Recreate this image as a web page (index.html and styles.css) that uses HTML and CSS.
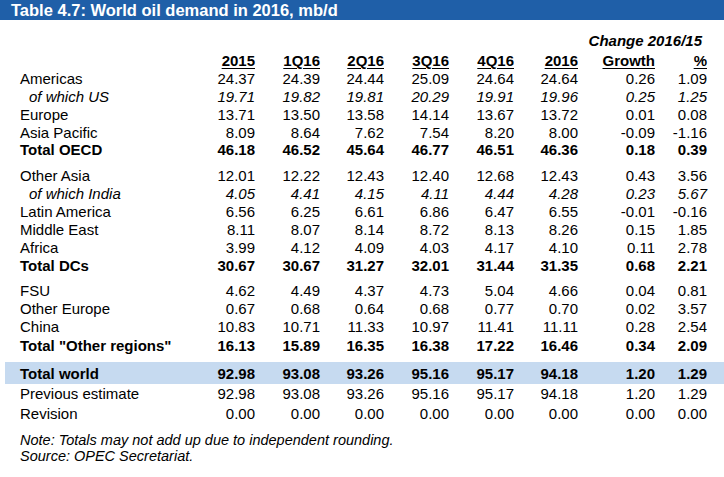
FILE: index.html
```html
<!DOCTYPE html>
<html>
<head>
<meta charset="utf-8">
<link rel="stylesheet" href="styles.css">
</head>
<body>
<div class="title">Table 4.7: World oil demand in 2016, mb/d</div>
<div class="tbl">
  <div class="change">Change 2016/15</div>
  <div class="row head">
    <span></span><span><u>2015</u></span><span><u>1Q16</u></span><span><u>2Q16</u></span><span><u>3Q16</u></span><span><u>4Q16</u></span><span><u>2016</u></span><span><u>Growth</u></span><span><u>%</u></span>
  </div>
  <div class="group">
    <div class="row"><span>Americas</span><span>24.37</span><span>24.39</span><span>24.44</span><span>25.09</span><span>24.64</span><span>24.64</span><span>0.26</span><span>1.09</span></div>
    <div class="row sub"><span>of which US</span><span>19.71</span><span>19.82</span><span>19.81</span><span>20.29</span><span>19.91</span><span>19.96</span><span>0.25</span><span>1.25</span></div>
    <div class="row"><span>Europe</span><span>13.71</span><span>13.50</span><span>13.58</span><span>14.14</span><span>13.67</span><span>13.72</span><span>0.01</span><span>0.08</span></div>
    <div class="row"><span>Asia Pacific</span><span>8.09</span><span>8.64</span><span>7.62</span><span>7.54</span><span>8.20</span><span>8.00</span><span>-0.09</span><span>-1.16</span></div>
    <div class="row total"><span>Total OECD</span><span>46.18</span><span>46.52</span><span>45.64</span><span>46.77</span><span>46.51</span><span>46.36</span><span>0.18</span><span>0.39</span></div>
  </div>
  <div class="group">
    <div class="row"><span>Other Asia</span><span>12.01</span><span>12.22</span><span>12.43</span><span>12.40</span><span>12.68</span><span>12.43</span><span>0.43</span><span>3.56</span></div>
    <div class="row sub"><span>of which India</span><span>4.05</span><span>4.41</span><span>4.15</span><span>4.11</span><span>4.44</span><span>4.28</span><span>0.23</span><span>5.67</span></div>
    <div class="row"><span>Latin America</span><span>6.56</span><span>6.25</span><span>6.61</span><span>6.86</span><span>6.47</span><span>6.55</span><span>-0.01</span><span>-0.16</span></div>
    <div class="row"><span>Middle East</span><span>8.11</span><span>8.07</span><span>8.14</span><span>8.72</span><span>8.13</span><span>8.26</span><span>0.15</span><span>1.85</span></div>
    <div class="row"><span>Africa</span><span>3.99</span><span>4.12</span><span>4.09</span><span>4.03</span><span>4.17</span><span>4.10</span><span>0.11</span><span>2.78</span></div>
    <div class="row total"><span>Total DCs</span><span>30.67</span><span>30.67</span><span>31.27</span><span>32.01</span><span>31.44</span><span>31.35</span><span>0.68</span><span>2.21</span></div>
  </div>
  <div class="group">
    <div class="row"><span>FSU</span><span>4.62</span><span>4.49</span><span>4.37</span><span>4.73</span><span>5.04</span><span>4.66</span><span>0.04</span><span>0.81</span></div>
    <div class="row"><span>Other Europe</span><span>0.67</span><span>0.68</span><span>0.64</span><span>0.68</span><span>0.77</span><span>0.70</span><span>0.02</span><span>3.57</span></div>
    <div class="row"><span>China</span><span>10.83</span><span>10.71</span><span>11.33</span><span>10.97</span><span>11.41</span><span>11.11</span><span>0.28</span><span>2.54</span></div>
    <div class="row total lastgroup"><span>Total "Other regions"</span><span>16.13</span><span>15.89</span><span>16.35</span><span>16.38</span><span>17.22</span><span>16.46</span><span>0.34</span><span>2.09</span></div>
  </div>
  <div class="row total world"><span>Total world</span><span>92.98</span><span>93.08</span><span>93.26</span><span>95.16</span><span>95.17</span><span>94.18</span><span>1.20</span><span>1.29</span></div>
  <div class="row after"><span>Previous estimate</span><span>92.98</span><span>93.08</span><span>93.26</span><span>95.16</span><span>95.17</span><span>94.18</span><span>1.20</span><span>1.29</span></div>
  <div class="row after"><span>Revision</span><span>0.00</span><span>0.00</span><span>0.00</span><span>0.00</span><span>0.00</span><span>0.00</span><span>0.00</span><span>0.00</span></div>
</div>
<div class="notes">
  <div>Note: Totals may not add up due to independent rounding.</div>
  <div>Source: OPEC Secretariat.</div>
</div>
</body>
</html>
```

FILE: styles.css
```css
html, body {
  margin: 0;
  padding: 0;
  background: #ffffff;
}
body {
  width: 724px;
  height: 477px;
  overflow: hidden;
  font-family: "Liberation Sans", Arial, sans-serif;
  color: #000;
}
.title {
  background: #1f5fa8;
  color: #ffffff;
  font-weight: bold;
  font-size: 16.5px;
  height: 20px;
  line-height: 20px;
  padding-left: 11px;
  white-space: nowrap;
}
.tbl {
  margin-left: 5px;
}
.change {
  margin-top: 11.5px;
  padding-bottom: 2.45px;
  line-height: 17.85px;
  font-size: 15px;
  font-weight: bold;
  font-style: italic;
  text-align: right;
  padding-right: 22px;
}
.row {
  display: grid;
  grid-template-columns: 180px 55px 65px 64px 65px 65px 64px 77px 52px;
  padding-left: 15px;
  font-size: 15px;
  line-height: 17.85px;
  white-space: nowrap;
}
.row > span:not(:first-child) {
  text-align: right;
}
.head {
  font-weight: bold;
  line-height: 18.3px;
}
.head u {
  text-decoration-thickness: 1px;
  text-underline-offset: 2px;
}
.sub {
  font-style: italic;
}
.sub > span:first-child {
  padding-left: 9px;
}
.total {
  font-weight: bold;
}
.group + .group {
  margin-top: 8px;
}
.lastgroup {
  padding-top: 1.5px;
}
.world {
  margin-top: 7px;
  padding-top: 1px;
  background: #c6daf0;
  line-height: 21px;
}
.after {
  line-height: 20px;
}
.notes {
  margin-top: 7.3px;
  padding-left: 20px;
  font-size: 14.5px;
  font-style: italic;
  line-height: 16.7px;
}
```
